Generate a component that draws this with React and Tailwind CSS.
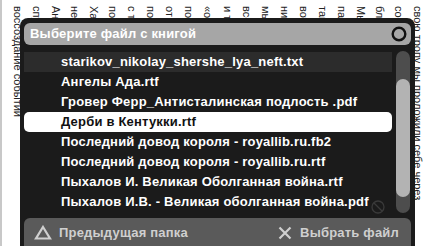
// Диалог выбора файла поверх страницы книги
const pageLines = [
  'воссоздание событий',
  'спустя много лет',
  'Ангелы не приходят',
  'не было никого',
  'Ханна сказала',
  'по дороге',
  'с тех пор',
  'последний раз',
  'от самого',
  'потом снова',
  '«она сказала',
  'и так далее',
  'все было',
  'мы шли',
  'никто',
  'вот',
  'там',
  'паутина',
  'Мы шли',
  'благодаря',
  'со временем',
  'свою тропу мы проложили себе через',
];

const files = [
  'starikov_nikolay_shershe_lya_neft.txt',
  'Ангелы Ада.rtf',
  'Гровер Ферр_Антисталинская подлость .pdf',
  'Дерби в Кентукки.rtf',
  'Последний довод короля - royallib.ru.fb2',
  'Последний довод короля - royallib.ru.rtf',
  'Пыхалов И. Великая Оболганная война.rtf',
  'Пыхалов И.В. - Великая оболганная война.pdf',
];

function App() {
  const selected = 3;

  return (
    <div className="relative w-[434px] h-[246px] overflow-hidden bg-white border-l-2 border-[#c8c8c8] font-['Liberation_Sans',Arial,sans-serif]">
      {/* Страница книги, повёрнутая набок */}
      <div className="flex justify-between pl-[9px] pr-[9px] pt-[6px] h-full">
        {pageLines.map((line, i) => (
          <div
            key={i}
            className="[writing-mode:vertical-rl] text-[11px] leading-[14px] text-[#222] whitespace-nowrap"
          >
            {line}
          </div>
        ))}
      </div>

      {/* Окно выбора файла */}
      <div className="absolute left-[18px] top-[18px] w-[395px] h-[240px] bg-[#1b1b1b] rounded-[8px] px-[4px] pt-[5px] flex flex-col">
        <div className="h-[22px] bg-[#a6a6a6] rounded-[6px] flex items-center justify-between pl-[6px] pr-[4px]">
          <span className="text-white font-bold text-[13px] tracking-[0.2px]">Выберите файл с книгой</span>
          <svg width="16" height="16" viewBox="0 0 16 16">
            <circle cx="8" cy="8" r="6.3" fill="none" stroke="#111" strokeWidth="2.4" />
          </svg>
        </div>

        <div className="relative flex mt-[6px] h-[162px]">
          <div className="flex-1 pt-[1px]">
            {files.map((name, i) => (
              <div
                key={i}
                className={`h-[20px] flex items-center pl-[37px] rounded-[5px] text-[13px] font-bold tracking-[0.2px] whitespace-nowrap ${
                  i === selected
                    ? 'bg-white text-[#111]'
                    : i === 0
                    ? 'bg-[#2c2c2c] text-white rounded-none'
                    : 'text-white'
                }`}
              >
                {name}
              </div>
            ))}
          </div>
          {/* Бледный значок, просвечивающий сквозь список */}
          <svg className="absolute left-[346px] top-[148px]" width="16" height="16" viewBox="0 0 16 16">
            <circle cx="8" cy="8" r="6" fill="none" stroke="#3a3a3a" strokeWidth="1.3" />
            <path d="M4 4 L12 12" stroke="#3a3a3a" strokeWidth="1.3" />
          </svg>
          <div className="w-[14px] ml-[4px] mr-[1px] rounded-full bg-[#4d4d4d] flex flex-col pt-[28px] pb-[16px]">
            <div className="flex-1 rounded-full bg-[#b3b3b3]"></div>
          </div>
        </div>

        <div className="mt-[5px] flex-1 bg-[#5a5a5a] rounded-t-[6px] flex items-start justify-between pt-[5px] pl-[10px] pr-[12px]">
          <div className="flex items-center gap-[7px]">
            <svg width="18" height="15" viewBox="0 0 18 15">
              <path d="M9 2 L16 13.5 L2 13.5 Z" fill="none" stroke="#cfcfcf" strokeWidth="2.2" strokeLinejoin="miter" />
            </svg>
            <span className="text-[#cfcfcf] font-bold text-[13px] tracking-[0.2px]">Предыдущая папка</span>
          </div>
          <div className="flex items-center gap-[8px]">
            <svg width="14" height="14" viewBox="0 0 14 14">
              <path d="M1.5 1.5 L12.5 12.5 M12.5 1.5 L1.5 12.5" stroke="#cfcfcf" strokeWidth="2.2" />
            </svg>
            <span className="text-[#cfcfcf] font-bold text-[13px] tracking-[0.2px]">Выбрать файл</span>
          </div>
        </div>
      </div>
    </div>
  );
}

export default App;
